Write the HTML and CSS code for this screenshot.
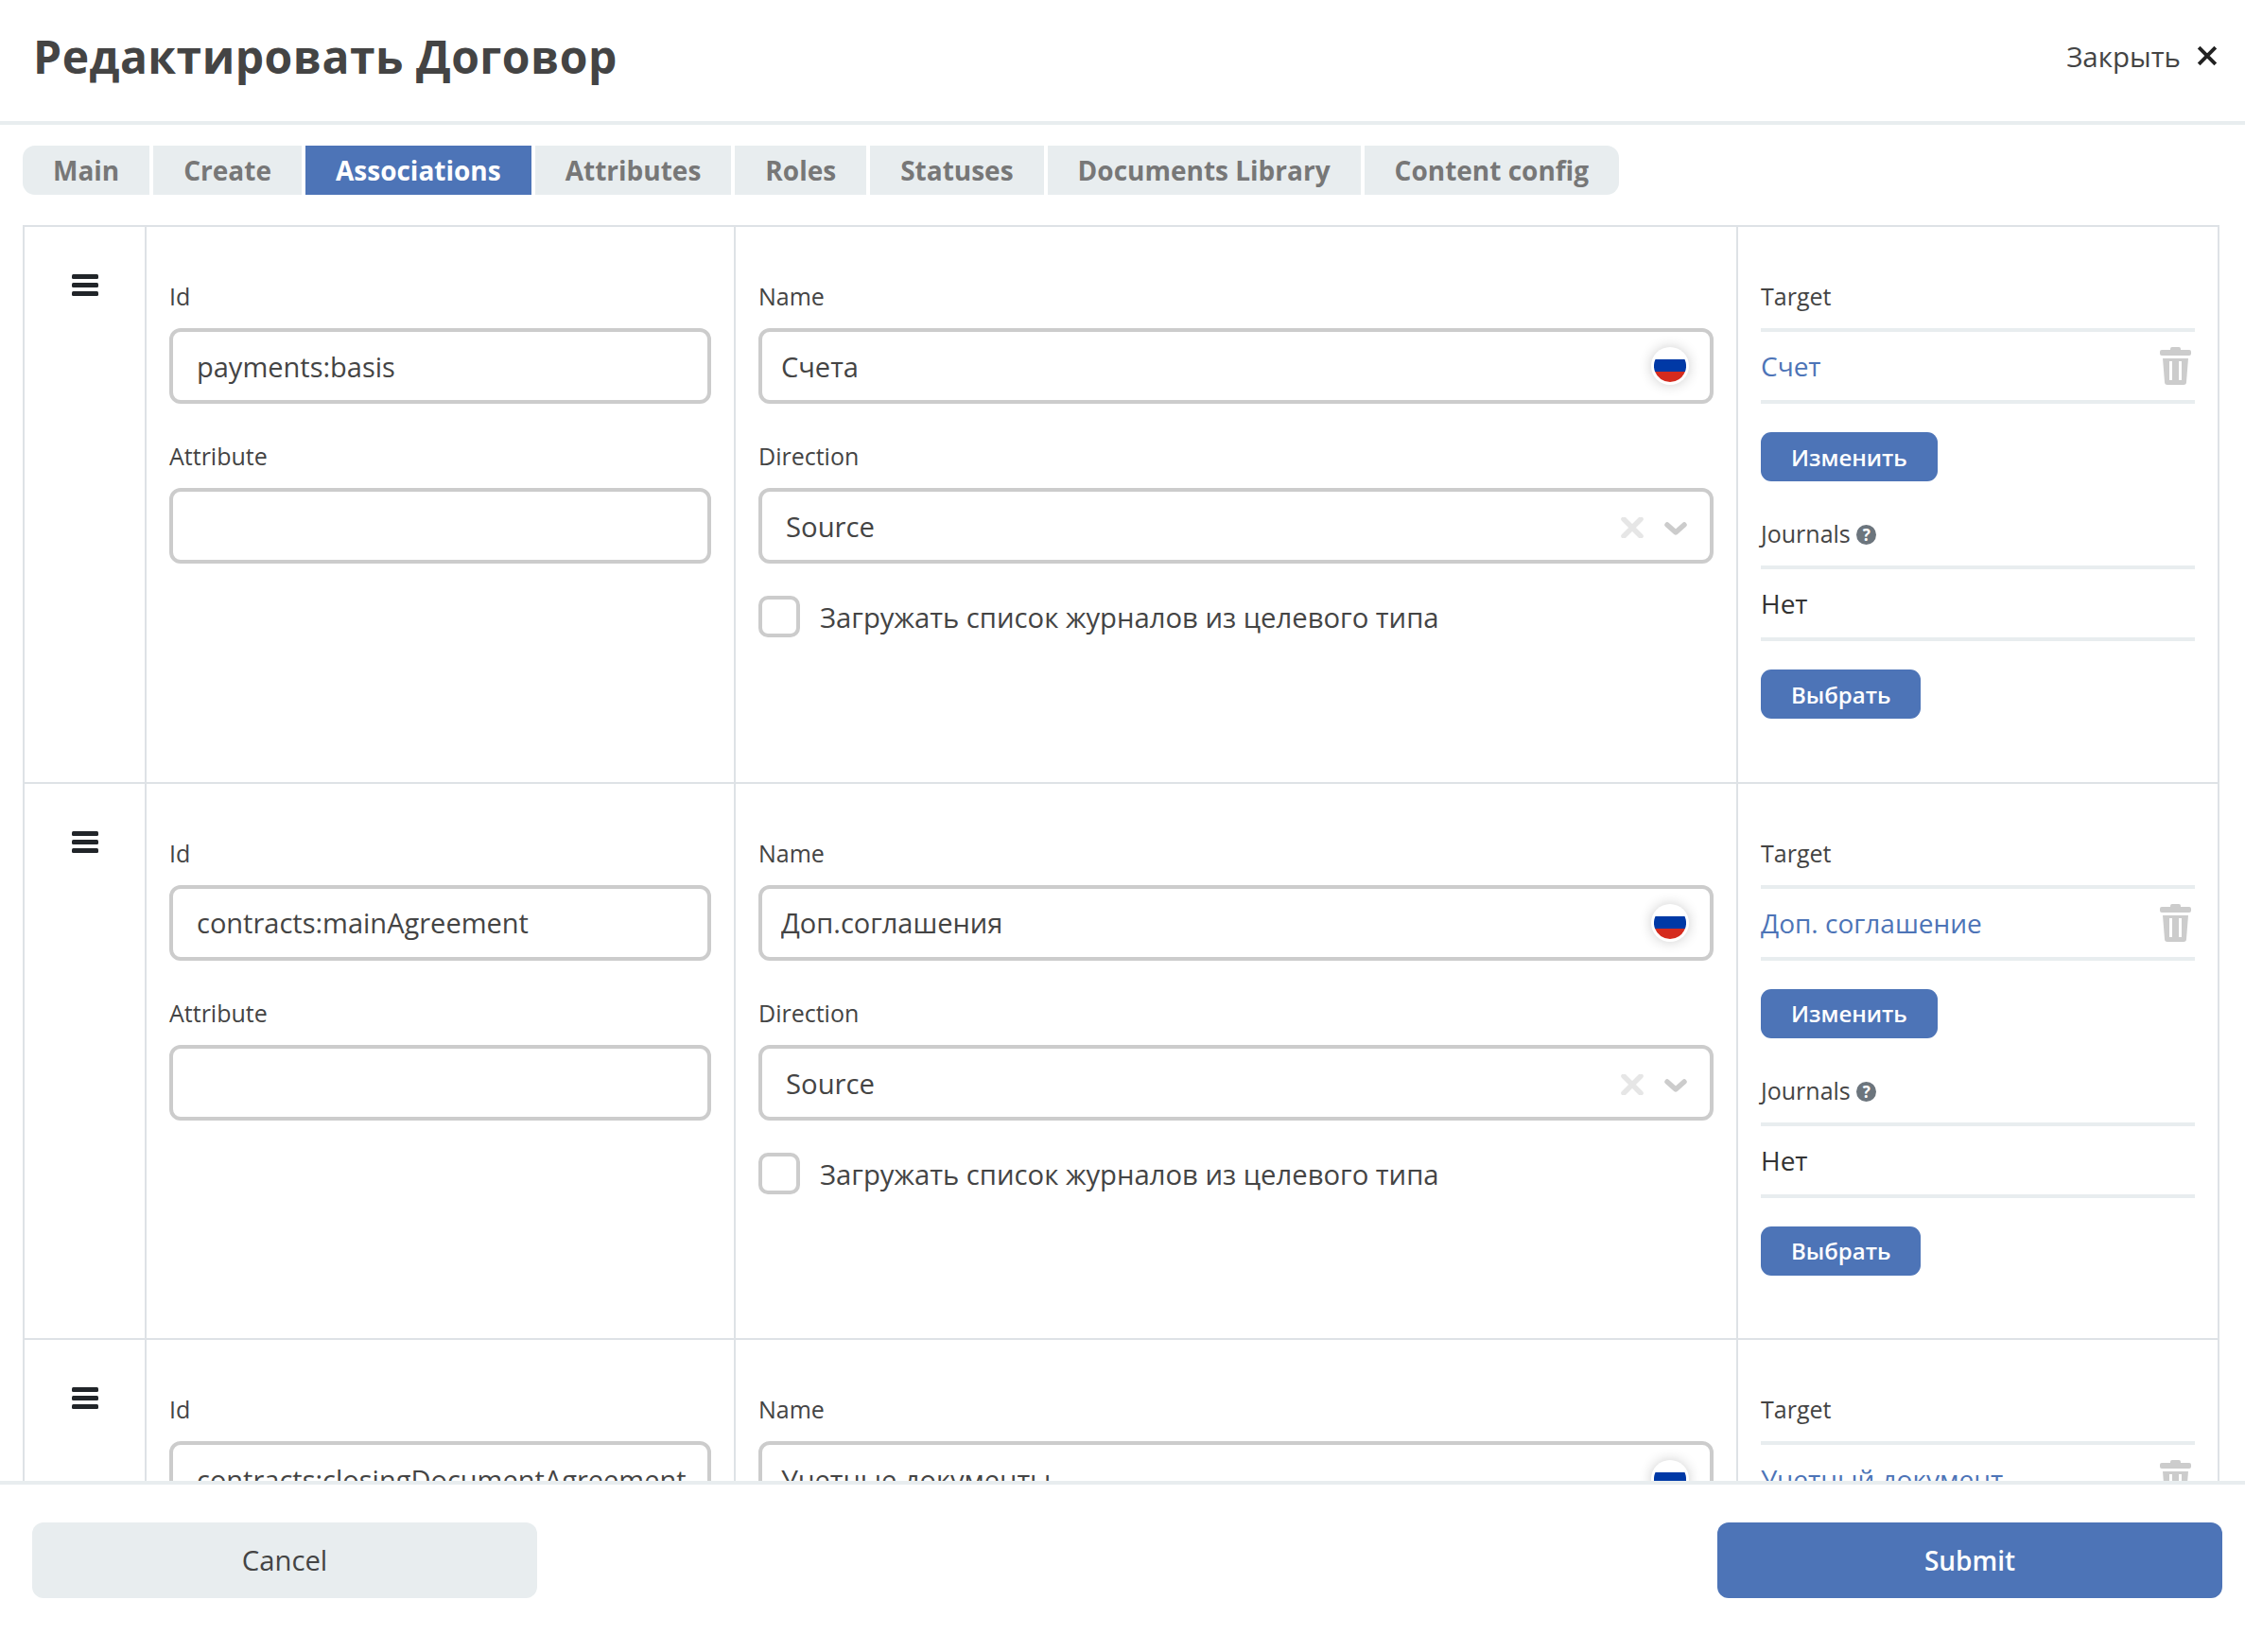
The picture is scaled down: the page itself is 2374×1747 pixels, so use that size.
FILE: index.html
```html
<!DOCTYPE html>
<html lang="en">
<head>
    <meta charset="UTF-8">
    <title>Редактировать Договор</title>
    <link rel="stylesheet" href="styles.css">
</head>
<body>
<div class="modal">

    <div class="modal-header">
        <h1>Редактировать Договор</h1>
        <div class="close">
            <span>Закрыть</span>
            <svg class="close-icon" viewBox="0 0 20 20"><path d="M2 2L18 18M18 2L2 18"/></svg>
        </div>
    </div>

    <div class="tabs">
        <div class="tab">Main</div>
        <div class="tab">Create</div>
        <div class="tab active">Associations</div>
        <div class="tab">Attributes</div>
        <div class="tab">Roles</div>
        <div class="tab">Statuses</div>
        <div class="tab">Documents Library</div>
        <div class="tab">Content config</div>
    </div>

    <div class="modal-body">
        <div class="table">

            <!-- row 1 -->
            <div class="row">
                <div class="cell cell-drag">
                    <svg class="drag-icon" viewBox="0 0 28 23"><rect width="28" height="5" rx="1.5"/><rect y="9" width="28" height="5" rx="1.5"/><rect y="18" width="28" height="5" rx="1.5"/></svg>
                </div>
                <div class="cell">
                    <label class="label">Id</label>
                    <div class="control control-id"><input type="text" value="payments:basis"></div>
                    <label class="label next">Attribute</label>
                    <div class="control control-id"><input type="text" value=""></div>
                </div>
                <div class="cell">
                    <label class="label">Name</label>
                    <div class="control">
                        <input type="text" value="Счета">
                        <span class="flag"><svg viewBox="0 0 34 34"><circle cx="17" cy="17" r="17" fill="#fff"/><path d="M1.5 10H32.5A17 17 0 0 1 32.9 23H1.1A17 17 0 0 1 1.5 10Z" fill="#0039a6"/><path d="M1.1 23H32.9A17 17 0 0 1 1.1 23Z" fill="#d52b1e"/></svg></span>
                    </div>
                    <label class="label next">Direction</label>
                    <div class="control control-select">
                        <span class="select-value">Source</span>
                        <svg class="clear-icon" viewBox="0 0 24 22"><path d="M3 2L21 20M21 2L3 20"/></svg>
                        <svg class="chevron-icon" viewBox="0 0 24 14"><path d="M3 3L12 11L21 3"/></svg>
                    </div>
                    <div class="check-line">
                        <span class="checkbox"></span>
                        <span class="check-text">Загружать список журналов из целевого типа</span>
                    </div>
                </div>
                <div class="cell">
                    <label class="label">Target</label>
                    <div class="ruled">
                        <a class="link">Счет</a>
                        <svg class="trash-icon" viewBox="0 0 33 40"><path d="M13 0H20A2 2 0 0 1 22 2V3H31A2 2 0 0 1 33 5V7A2 2 0 0 1 31 9H2A2 2 0 0 1 0 7V5A2 2 0 0 1 2 3H11V2A2 2 0 0 1 13 0Z"/><path fill-rule="evenodd" d="M3 12H30L28 37A3 3 0 0 1 25 40H8A3 3 0 0 1 5 37ZM10 15V35H13V15ZM20 15V35H23V15Z"/></svg>
                    </div>
                    <button class="btn">Изменить</button>
                    <label class="label next">Journals <span class="help">?</span></label>
                    <div class="ruled"><span>Нет</span></div>
                    <button class="btn">Выбрать</button>
                </div>
            </div>

            <!-- row 2 -->
            <div class="row">
                <div class="cell cell-drag">
                    <svg class="drag-icon" viewBox="0 0 28 23"><rect width="28" height="5" rx="1.5"/><rect y="9" width="28" height="5" rx="1.5"/><rect y="18" width="28" height="5" rx="1.5"/></svg>
                </div>
                <div class="cell">
                    <label class="label">Id</label>
                    <div class="control control-id"><input type="text" value="contracts:mainAgreement"></div>
                    <label class="label next">Attribute</label>
                    <div class="control control-id"><input type="text" value=""></div>
                </div>
                <div class="cell">
                    <label class="label">Name</label>
                    <div class="control">
                        <input type="text" value="Доп.соглашения">
                        <span class="flag"><svg viewBox="0 0 34 34"><circle cx="17" cy="17" r="17" fill="#fff"/><path d="M1.5 10H32.5A17 17 0 0 1 32.9 23H1.1A17 17 0 0 1 1.5 10Z" fill="#0039a6"/><path d="M1.1 23H32.9A17 17 0 0 1 1.1 23Z" fill="#d52b1e"/></svg></span>
                    </div>
                    <label class="label next">Direction</label>
                    <div class="control control-select">
                        <span class="select-value">Source</span>
                        <svg class="clear-icon" viewBox="0 0 24 22"><path d="M3 2L21 20M21 2L3 20"/></svg>
                        <svg class="chevron-icon" viewBox="0 0 24 14"><path d="M3 3L12 11L21 3"/></svg>
                    </div>
                    <div class="check-line">
                        <span class="checkbox"></span>
                        <span class="check-text">Загружать список журналов из целевого типа</span>
                    </div>
                </div>
                <div class="cell">
                    <label class="label">Target</label>
                    <div class="ruled">
                        <a class="link">Доп. соглашение</a>
                        <svg class="trash-icon" viewBox="0 0 33 40"><path d="M13 0H20A2 2 0 0 1 22 2V3H31A2 2 0 0 1 33 5V7A2 2 0 0 1 31 9H2A2 2 0 0 1 0 7V5A2 2 0 0 1 2 3H11V2A2 2 0 0 1 13 0Z"/><path fill-rule="evenodd" d="M3 12H30L28 37A3 3 0 0 1 25 40H8A3 3 0 0 1 5 37ZM10 15V35H13V15ZM20 15V35H23V15Z"/></svg>
                    </div>
                    <button class="btn">Изменить</button>
                    <label class="label next">Journals <span class="help">?</span></label>
                    <div class="ruled"><span>Нет</span></div>
                    <button class="btn">Выбрать</button>
                </div>
            </div>

            <!-- row 3, cut off by the footer -->
            <div class="row">
                <div class="cell cell-drag">
                    <svg class="drag-icon" viewBox="0 0 28 23"><rect width="28" height="5" rx="1.5"/><rect y="9" width="28" height="5" rx="1.5"/><rect y="18" width="28" height="5" rx="1.5"/></svg>
                </div>
                <div class="cell">
                    <label class="label">Id</label>
                    <div class="control control-id"><input type="text" value="contracts:closingDocumentAgreement"></div>
                </div>
                <div class="cell">
                    <label class="label">Name</label>
                    <div class="control">
                        <input type="text" value="Учетные документы">
                        <span class="flag"><svg viewBox="0 0 34 34"><circle cx="17" cy="17" r="17" fill="#fff"/><path d="M1.5 10H32.5A17 17 0 0 1 32.9 23H1.1A17 17 0 0 1 1.5 10Z" fill="#0039a6"/><path d="M1.1 23H32.9A17 17 0 0 1 1.1 23Z" fill="#d52b1e"/></svg></span>
                    </div>
                </div>
                <div class="cell">
                    <label class="label">Target</label>
                    <div class="ruled">
                        <a class="link">Учетный документ</a>
                        <svg class="trash-icon" viewBox="0 0 33 40"><path d="M13 0H20A2 2 0 0 1 22 2V3H31A2 2 0 0 1 33 5V7A2 2 0 0 1 31 9H2A2 2 0 0 1 0 7V5A2 2 0 0 1 2 3H11V2A2 2 0 0 1 13 0Z"/><path fill-rule="evenodd" d="M3 12H30L28 37A3 3 0 0 1 25 40H8A3 3 0 0 1 5 37ZM10 15V35H13V15ZM20 15V35H23V15Z"/></svg>
                    </div>
                </div>
            </div>

        </div>
    </div>

    <div class="modal-footer">
        <button class="footer-btn cancel">Cancel</button>
        <button class="footer-btn submit">Submit</button>
    </div>

</div>
</body>
</html>
```

FILE: styles.css
```css
* {
    box-sizing: border-box;
}
html, body {
    height: 100%;
    margin: 0;
    overflow: hidden;
}
body {
    font-family: "Open Sans", sans-serif;
    color: #444;
    background: #fff;
}
.modal {
    height: 1747px;
    display: flex;
    flex-direction: column;
}

/* header */
.modal-header {
    height: 132px;
    flex: none;
    display: flex;
    align-items: center;
    justify-content: space-between;
    padding: 0 29px 10px 35px;
    border-bottom: 4px solid #e8edef;
}
.modal-header h1 {
    margin: 0;
    font-size: 48px;
    font-weight: 700;
    letter-spacing: .5px;
    color: #444;
}
.close {
    display: flex;
    align-items: center;
    gap: 17px;
    font-size: 29.5px;
    color: #444;
}
.close-icon {
    width: 22px;
    height: 22px;
    fill: none;
    stroke: #222;
    stroke-width: 3.5;
}

/* tabs */
.tabs {
    flex: none;
    display: flex;
    gap: 4px;
    margin: 22px 0 0 24px;
}
.tab {
    height: 52px;
    line-height: 52px;
    padding: 0 32px;
    font-size: 28px;
    font-weight: 700;
    color: #777;
    background: #e8edef;
}
.tab:first-child {
    border-radius: 13px 0 0 13px;
}
.tab:last-child {
    border-radius: 0 13px 13px 0;
}
.tab.active {
    color: #fff;
    background: #4d74b7;
}

/* table */
.modal-body {
    flex: 1;
    min-height: 0;
    overflow: hidden;
    margin-top: 32px;
    padding: 0 27px 0 24px;
}
.table {
    border: 2px solid #dee2e6;
    border-bottom: 0;
}
.row {
    display: grid;
    grid-template-columns: 127px 623px 1060px 1fr;
    height: 588.5px;
    border-bottom: 2px solid #dee2e6;
}
.cell {
    padding: 55px 24px 0;
    border-left: 2px solid #dee2e6;
}
.cell:first-child {
    border-left: 0;
}
.cell-drag {
    padding: 50px 0 0 50px;
}
.drag-icon {
    display: block;
    width: 28px;
    height: 23px;
    fill: #212529;
}
.label {
    display: block;
    height: 36px;
    line-height: 36px;
    margin-bottom: 16px;
    font-size: 25px;
    color: #444;
}
.label.next {
    margin-top: 37px;
}
.control {
    height: 80px;
    display: flex;
    align-items: center;
    padding: 0 22px 0 20px;
    border: 4px solid #ccc;
    border-radius: 12px;
    background: #fff;
}
.control input {
    flex: 1;
    min-width: 0;
    border: 0;
    outline: 0;
    padding: 0;
    font: inherit;
    font-size: 29px;
    color: #444;
    background: transparent;
}
.control-id {
    padding-left: 25px;
}
.flag {
    flex: none;
    width: 40px;
    height: 40px;
    padding: 3px;
    border-radius: 50%;
    background: #fff;
    box-shadow: 0 0 14px rgba(0, 0, 0, .2);
}
.flag svg {
    display: block;
    width: 34px;
    height: 34px;
}
.control-select {
    padding: 0 24px 0 25px;
}
.select-value {
    flex: 1;
    padding-top: 2px;
    font-size: 29.25px;
}
.clear-icon {
    width: 24px;
    height: 22px;
    margin-top: 4px;
    fill: none;
    stroke: #e6e6e6;
    stroke-width: 5.5;
    stroke-linecap: round;
}
.chevron-icon {
    width: 24px;
    height: 14px;
    margin: 6px 0 0 22px;
    fill: none;
    stroke: #ccc;
    stroke-width: 5.5;
    stroke-linecap: round;
    stroke-linejoin: round;
}
.check-line {
    display: flex;
    align-items: center;
    gap: 21px;
    margin-top: 34px;
    font-size: 29.25px;
}
.check-text {
    padding-top: 2px;
}
.checkbox {
    flex: none;
    width: 44px;
    height: 44px;
    border: 4px solid #ccc;
    border-radius: 10px;
}
.ruled {
    height: 80px;
    display: flex;
    align-items: center;
    justify-content: space-between;
    padding-right: 4px;
    border-top: 4px solid #e8edef;
    border-bottom: 4px solid #e8edef;
    font-size: 28px;
    color: #333;
}
.link {
    color: #4d74b7;
}
.trash-icon {
    width: 33px;
    height: 40px;
    fill: #ccc;
}
.help {
    display: inline-block;
    width: 21px;
    height: 21px;
    line-height: 21px;
    border-radius: 50%;
    text-align: center;
    vertical-align: 2px;
    font-size: 17px;
    font-weight: 700;
    color: #fff;
    background: #6c757d;
}
.btn {
    display: block;
    height: 52px;
    margin-top: 30px;
    padding: 0 32px;
    border: 0;
    border-radius: 11px;
    font: inherit;
    font-size: 24px;
    font-weight: 600;
    color: #fff;
    background: #4d74b7;
}

/* footer */
.modal-footer {
    flex: none;
    height: 181px;
    display: flex;
    justify-content: space-between;
    padding: 40px 24px 0 34px;
    border-top: 4px solid #e8edef;
    background: #fff;
}
.footer-btn {
    width: 534px;
    height: 80px;
    border: 0;
    border-radius: 12px;
    font: inherit;
    font-size: 29.25px;
}
.cancel {
    color: #444;
    background: #e8edef;
}
.submit {
    font-size: 28px;
    font-weight: 600;
    color: #fff;
    background: #4d74b7;
}
```
